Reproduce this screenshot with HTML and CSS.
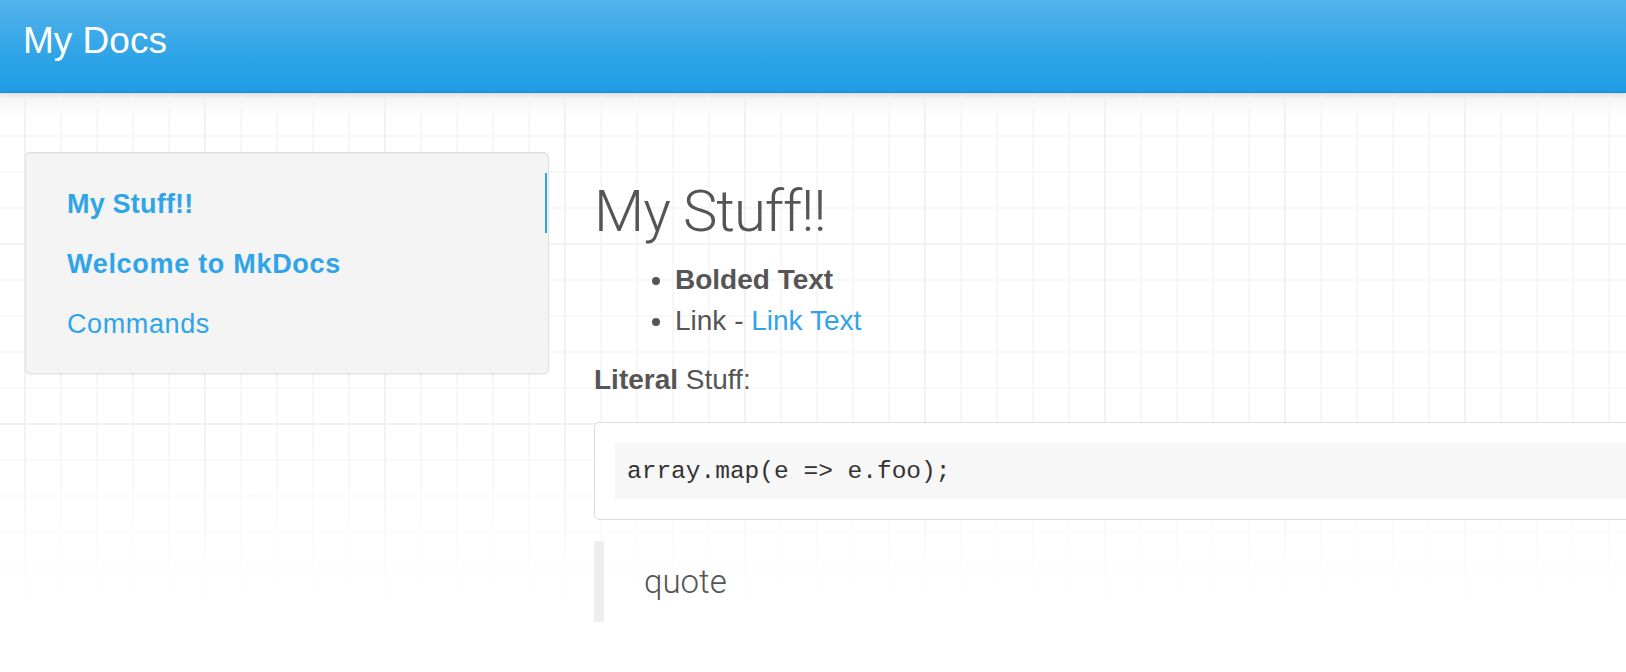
FILE: index.html
```html
<!DOCTYPE html>
<html lang="en">
<head>
<meta charset="utf-8">
<title>My Docs</title>
<link rel="stylesheet" href="styles.css">
</head>
<body>
<header class="navbar">
  <a class="brand" href="#">My Docs</a>
</header>
<div class="page">
  <aside class="sidebar">
    <ul class="nav">
      <li class="active"><a class="strong" href="#">My Stuff!!</a></li>
      <li><a class="strong" href="#">Welcome to MkDocs</a></li>
      <li><a href="#">Commands</a></li>
    </ul>
  </aside>
  <main class="content">
    <h1 class="title">My Stuff!!</h1>
    <ul class="list">
      <li><strong>Bolded Text</strong></li>
      <li>Link - <a href="#">Link Text</a></li>
    </ul>
    <p class="para"><strong>Literal</strong> Stuff:</p>
    <pre class="codebox"><code>array.map(e =&gt; e.foo);</code></pre>
    <blockquote class="quote"><p>quote</p></blockquote>
  </main>
</div>
</body>
</html>
```
FILE: styles.css
```css
html, body {
  margin: 0;
  padding: 0;
  height: 672px;
  overflow: hidden;
}

body {
  font-family: "Liberation Sans", Arial, sans-serif;
  font-size: 28px;
  line-height: 40.5px;
  color: #555;
  background-color: #fff;
  background-image:
    linear-gradient(to bottom, rgba(255,255,255,0) 0, rgba(255,255,255,0) 440px, #fff 606px),
    linear-gradient(to right, #f2f2f2 0, #f2f2f2 2px, transparent 2px),
    linear-gradient(to bottom, #f2f2f2 0, #f2f2f2 2px, transparent 2px),
    linear-gradient(to right, #f7f7f7 0, #f7f7f7 2px, transparent 2px),
    linear-gradient(to bottom, #f7f7f7 0, #f7f7f7 2px, transparent 2px),
    linear-gradient(to bottom, #f2f2f2 0, #f2f2f2 93px, #fff 118px);
  background-size:
    100% 100%,
    180px 100%,
    100% 180px,
    36px 100%,
    100% 36px,
    100% 100%;
  background-position:
    0 0,
    24px 0,
    0 63px,
    24px 0,
    0 27px,
    0 0;
  background-repeat:
    no-repeat,
    repeat-x,
    repeat-y,
    repeat-x,
    repeat-y,
    no-repeat;
}

a {
  color: #2fa4e7;
  text-decoration: none;
}

.navbar {
  height: 92px;
  box-sizing: content-box;
  padding: 0 23px;
  background: linear-gradient(#54b4eb, #2fa4e7 60%, #1d9ce5);
  border-bottom: 1px solid #178acc;
  box-shadow: 0 1px 6px rgba(0, 0, 0, 0.12);
}

.brand {
  display: inline-block;
  color: #fff;
  font-size: 37px;
  line-height: 82px;
}

.page {
  display: flex;
  align-items: flex-start;
  gap: 45px;
  padding: 59px 0 0 25px;
}

.sidebar {
  flex: 0 0 524px;
  box-sizing: border-box;
  background: #f4f4f4;
  border: 1px solid #e1e1e1;
  border-radius: 5px;
  box-shadow: inset 0 1px 1px rgba(0, 0, 0, 0.05), 0 1px 2px rgba(0, 0, 0, 0.06);
  padding: 20px 1px 20px 0;
}

.nav {
  list-style: none;
  margin: 0;
  padding: 0;
}

.nav a {
  display: block;
  padding: 11px 40px 9px 41px;
  line-height: 40px;
  font-size: 27px;
  letter-spacing: 0.6px;
  border-right: 2px solid transparent;
}

.nav a.strong {
  font-weight: bold;
  letter-spacing: 0.7px;
}

.nav .active a {
  border-right-color: #2fa4e7;
  letter-spacing: 0.2px;
}

.content {
  flex: 0 0 1100px;
}

.title {
  font-family: Roboto, "Liberation Sans", sans-serif;
  font-weight: 300;
  font-size: 58px;
  line-height: 66px;
  letter-spacing: -1px;
  color: #555;
  margin: 26px 0 16px;
}

.list {
  margin: 0 0 19px;
  padding-left: 81px;
}

.para {
  margin: 0 0 21px;
}

.codebox {
  margin: 0 0 21px;
  padding: 20px;
  background: #fff;
  border: 1px solid #dcdcdc;
  border-radius: 5px;
}

.codebox code {
  display: block;
  background: #f7f7f7;
  padding: 11px 12px 9px;
  font-family: "Liberation Mono", "Courier New", monospace;
  font-size: 24.5px;
  line-height: 36px;
  color: #333;
}

.quote {
  margin: 0;
  border-left: 10px solid #eee;
  padding: 16px 0 16px 40px;
  font-family: Roboto, "Liberation Sans", sans-serif;
  font-weight: 300;
  font-size: 33px;
  line-height: 1.5;
  color: #555;
}

.quote p {
  margin: 0;
}
```
